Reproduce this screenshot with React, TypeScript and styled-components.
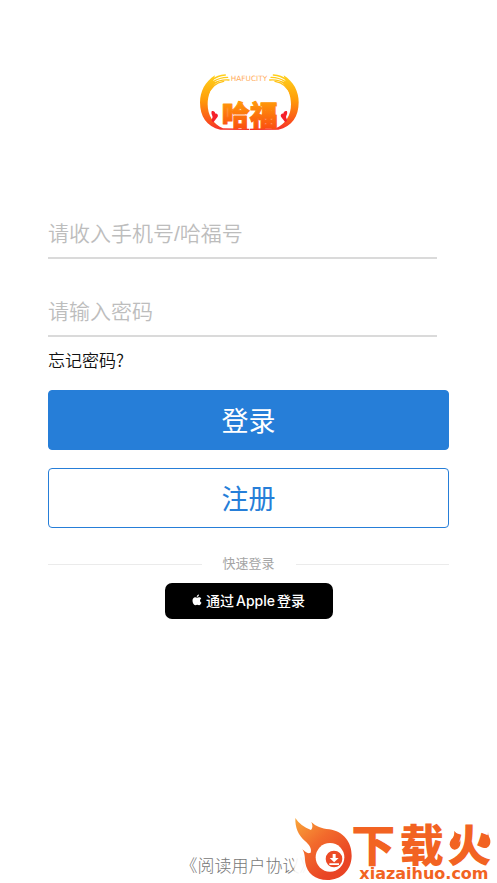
import React from 'react';
import styled, { createGlobalStyle } from 'styled-components';

const GlobalStyle = createGlobalStyle`
  *, *::before, *::after { box-sizing: border-box; }
  body {
    margin: 0;
    background: #fff;
    font-family: 'Liberation Sans', 'Noto Sans CJK SC', sans-serif;
  }
`;

const Page = styled.main`
  position: relative;
  display: flex;
  flex-direction: column;
  min-height: 100vh;
  padding: 65px 48px 4px;
  overflow: hidden;
`;

const Brand = styled.header`
  display: flex;
  justify-content: center;
  margin-bottom: 68px;
`;

const Form = styled.form`
  display: flex;
  flex-direction: column;
`;

const Field = styled.input`
  height: 51px;
  margin: 0 12px 27px 0;
  padding: 2px 0 0;
  border: 0;
  border-bottom: 2px solid #dadada;
  border-radius: 0;
  outline: 0;
  background: transparent;
  color: #222;
  font-family: inherit;
  font-size: 21px;
  font-weight: 350;

  &::placeholder {
    color: #bdbdbd;
    opacity: 1;
  }
`;

const ForgotLink = styled.a`
  align-self: flex-start;
  margin: -16px 0 18px;
  color: #111;
  font-family: 'Noto Sans CJK SC', sans-serif;
  font-size: 17px;
  font-weight: 350;
  line-height: 24px;
  text-decoration: none;
`;

const ActionButton = styled.button<{ $filled?: boolean }>`
  height: 60px;
  margin-bottom: 18px;
  padding: 0 0 2px;
  border: 1px solid #267ed8;
  border-radius: 4px;
  background: ${({ $filled }) => ($filled ? '#267ed8' : '#fff')};
  color: ${({ $filled }) => ($filled ? '#fff' : '#267ed8')};
  font-family: inherit;
  font-size: 27px;
  font-weight: 400;
  cursor: pointer;
`;

const Divider = styled.div`
  display: flex;
  align-items: center;
  gap: 21px;
  margin: 8px 0 9px;
  color: #a5a5a5;
  font-size: 13px;
  line-height: 20px;

  &::before,
  &::after {
    content: '';
    flex: 1;
    height: 1px;
    background: #ebebeb;
  }
`;

const AppleButton = styled.button`
  display: flex;
  align-self: center;
  align-items: center;
  justify-content: center;
  gap: 4px;
  width: 168px;
  height: 36px;
  padding: 0 0 2px;
  border: 0;
  border-radius: 7px;
  background: #000;
  color: #fff;
  font-family: Inter, 'Noto Sans CJK SC', sans-serif;
  font-size: 14px;
  font-weight: 500;
  cursor: pointer;
`;

const AppleLabel = styled.span`
  display: flex;
  align-items: center;
  gap: 2px;
`;

const Agreement = styled.a`
  align-self: center;
  margin-top: auto;
  color: #777;
  font-family: 'Noto Sans CJK SC', sans-serif;
  font-size: 17px;
  font-weight: 300;
  line-height: 28px;
  text-decoration: none;
  white-space: nowrap;
`;

const Watermark = styled.aside`
  position: absolute;
  right: 0;
  bottom: 0;
  display: flex;
  background: linear-gradient(90deg, transparent 9px, rgba(255, 255, 255, 0.9) 11px);
`;

function HafuLogo() {
  return (
    <svg width="116" height="75" viewBox="0 0 348 225" role="img" aria-label="哈福 HAFUCITY">
      <defs>
        <linearGradient id="wing" gradientUnits="userSpaceOnUse" x1="0" y1="28" x2="0" y2="196">
          <stop offset="0" stopColor="#ffd21c" />
          <stop offset="0.45" stopColor="#ff9d0a" />
          <stop offset="0.8" stopColor="#fb5a18" />
          <stop offset="1" stopColor="#f52d2d" />
        </linearGradient>
        <linearGradient id="name" x1="0" y1="0" x2="0" y2="1">
          <stop offset="0.2" stopColor="#ff9a0a" />
          <stop offset="0.9" stopColor="#fa4b10" />
        </linearGradient>
        <g id="side">
          <path
            fill="url(#wing)"
            d="M72 31 C42 50 27 80 27 112 C27 153 46 186 88 194 L174 195 L174 191 L96 190 C66 178 50 150 50 118 C50 90 60 66 80 50 L66 50 Z"
          />
          <g fill="none" stroke="url(#wing)" strokeWidth="4" strokeLinecap="round">
            <path d="M40 78 C50 50 72 33 103 30" />
            <path d="M44 82 C54 54 76 38 110 37" />
            <path d="M47 86 C58 58 80 42 114 45" />
            <path d="M48 94 C58 68 74 52 98 49" />
          </g>
          <path d="M62 139 C67 136 72 140 73 146 C78 145 83 150 80 155 L68 171 C63 171 60 167 64 159 C67 153 59 149 62 139 Z" fill="#f5202a" />
        </g>
      </defs>
      <use href="#side" />
      <use href="#side" transform="translate(350 0) scale(-1 1)" />
      <text x="174" y="49" textAnchor="middle" fontFamily="DejaVu Sans, sans-serif" fontSize="22" fill="#ffad5c">HAFUCITY</text>
      <text
        x="176"
        y="182"
        textAnchor="middle"
        fontFamily="Noto Sans CJK SC, sans-serif"
        fontSize="84"
        fontWeight="900"
        fill="url(#name)"
        stroke="url(#name)"
        strokeWidth="3"
        strokeLinejoin="round"
      >
        哈福
      </text>
    </svg>
  );
}

function AppleMark() {
  return (
    <svg width="10" height="12" viewBox="0 0 20 24" aria-hidden="true">
      <path
        fill="#fff"
        d="M14 1 C14 4 12 6 9.500 6 C9.500 3 11.500 1.500 14 1 Z M10 7.500 C11.200 7.500 12.300 6.500 14 6.500 C16 6.500 17.500 7.500 18.500 9 C14.800 11.300 15.500 16 19 17.500 C17.800 20.500 16 22.500 14.200 22.500 C12.800 22.500 12 21.700 10.300 21.700 C8.600 21.700 7.800 22.500 6.500 22.500 C3.500 22.500 1 17.700 1 13.500 C1 9 3.500 6.600 6.400 6.600 C8 6.600 9.200 7.500 10 7.500 Z"
      />
    </svg>
  );
}

function SiteMark() {
  return (
    <svg width="213" height="78" viewBox="0 0 639 234" role="img" aria-label="下载火 xiazaihuo.com">
      <defs>
        <linearGradient id="flame" x1="0" y1="0" x2="0.65" y2="0.85">
          <stop offset="0" stopColor="#f9a63a" />
          <stop offset="0.5" stopColor="#f26a2c" />
          <stop offset="1" stopColor="#e94424" />
        </linearGradient>
      </defs>
      <path
        fill="url(#flame)"
        d="M34 39 C44 55 60 67 81 75 C87 68 86 60 82 51 C96 65 112 70 136 73 C178 79 204 112 203 153 C202 197 171 225 130 225 C94 225 68 203 64 173 C62 157 63 145 55 133 C63 139 70 148 80 143 C84 129 75 119 63 108 C43 91 33 68 34 39 Z"
      />
      <circle cx="138" cy="157" r="43" fill="#fff" />
      <circle cx="150" cy="162" r="25" fill="#ec4a26" />
      <path d="M146 147 H155 V159 H164 L150.500 172 L137 159 H146 Z M136 175 H165 V180 H136 Z" fill="#fff" />
      <g fill="#f26322">
        <g fontFamily="Noto Sans CJK SC, sans-serif" fontSize="132" fontWeight="900">
          <text x="202" y="172">下</text>
          <text x="347" y="172">载</text>
          <text x="490" y="172">火</text>
        </g>
        <path d="M510 78 C527 90 522 103 521 114 C530 111 528 103 526 99 C535 114 526 135 511 134 C494 130 493 110 506 99 C512 92 512 86 510 78 Z" />
        <path d="M612 80 C612 91 616 96 618 102 C623 119 611 134 597 128 C589 120 595 107 605 100 C611 94 612 88 612 80 Z" />
        <text x="226" y="221" fontFamily="DejaVu Sans, sans-serif" fontSize="48" fontWeight="700">xiazaihuo.com</text>
      </g>
    </svg>
  );
}

export default function App() {
  return (
    <>
      <GlobalStyle />
      <Page>
        <Brand>
          <HafuLogo />
        </Brand>
        <Form onSubmit={(event) => event.preventDefault()}>
          <Field type="text" aria-label="手机号/哈福号" placeholder="请收入手机号/哈福号" />
          <Field type="password" aria-label="密码" placeholder="请输入密码" />
          <ForgotLink href="#forgot">忘记密码?</ForgotLink>
          <ActionButton type="submit" $filled>登录</ActionButton>
          <ActionButton type="button">注册</ActionButton>
          <Divider>快速登录</Divider>
          <AppleButton type="button">
            <AppleMark />
            <AppleLabel>
              <span>通过</span>
              <span>Apple</span>
              <span>登录</span>
            </AppleLabel>
          </AppleButton>
        </Form>
        <Agreement href="#agreement">《阅读用户协议》</Agreement>
        <Watermark>
          <SiteMark />
        </Watermark>
      </Page>
    </>
  );
}
